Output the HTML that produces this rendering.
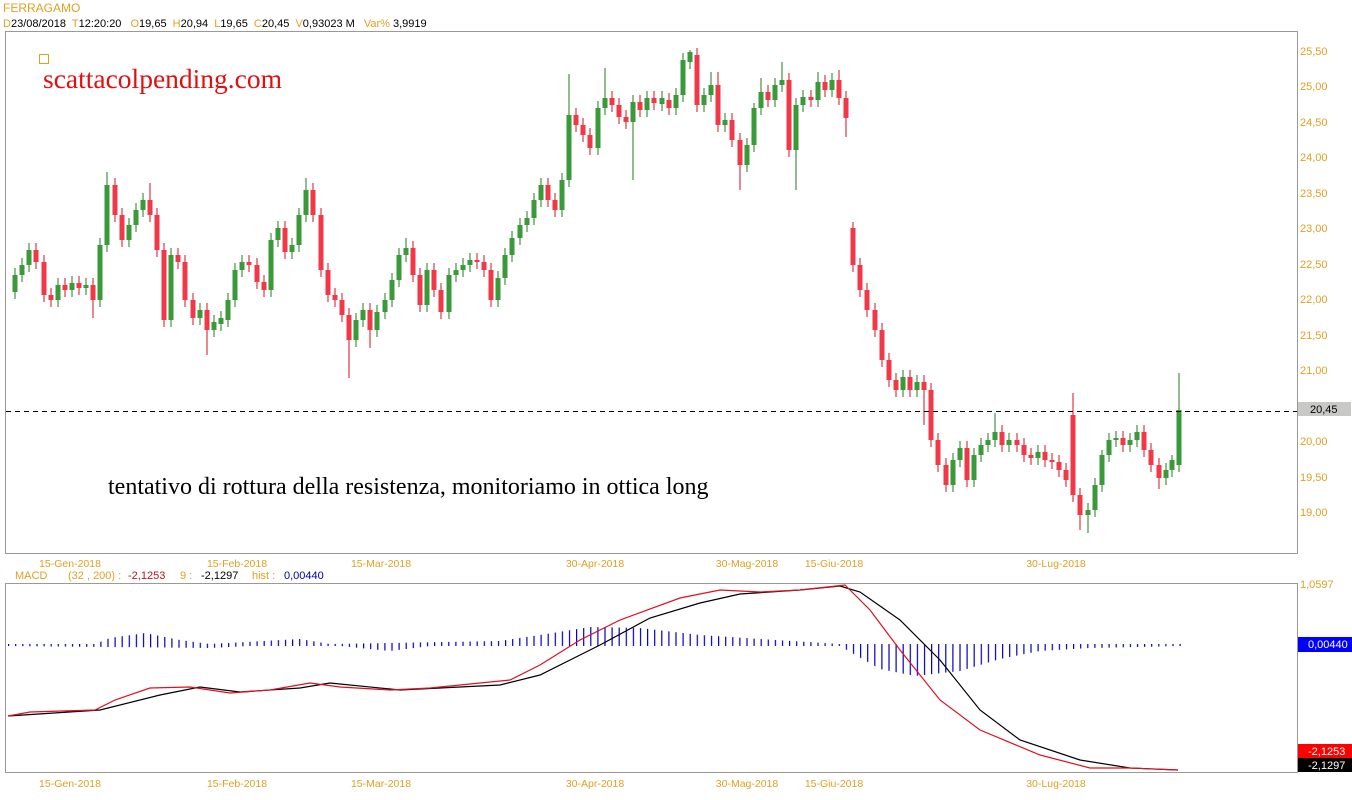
<!DOCTYPE html>
<html><head><meta charset="utf-8">
<style>
body{margin:0;background:#fff;width:1352px;height:800px;overflow:hidden;font-family:"Liberation Sans",sans-serif;}
svg{position:absolute;left:0;top:0}
.o{fill:#e0a020}
</style></head><body>
<svg width="1352" height="800" xmlns="http://www.w3.org/2000/svg" font-family="Liberation Sans, sans-serif" font-size="11">
<defs>
<pattern id="hp" x="8" y="0" width="7.1" height="800" patternUnits="userSpaceOnUse"><rect x="0" y="0" width="1.2" height="800" fill="#0000c0"/></pattern>
</defs>
<text x="3" y="12" class="o" font-size="12">FERRAGAMO</text>
<text x="3" y="27" font-size="11"><tspan class="o">D</tspan>23/08/2018 <tspan class="o" dx="3">T</tspan>12:20:20 <tspan class="o" dx="6">O</tspan>19,65 <tspan class="o" dx="3">H</tspan>20,94 <tspan class="o" dx="3">L</tspan>19,65 <tspan class="o" dx="3">C</tspan>20,45 <tspan class="o" dx="3">V</tspan>0,93023 M <tspan class="o" dx="6">Var%</tspan> 3,9919</text>
<rect x="5.5" y="31.5" width="1292" height="522" fill="none" stroke="#999"/>
<rect x="39.5" y="54.5" width="9" height="9" fill="none" stroke="#e0a020"/>
<text x="43" y="88" fill="#e01010" font-family="Liberation Serif, serif" font-size="27.5">scattacolpending.com</text>
<text x="108" y="494" fill="#000" font-family="Liberation Serif, serif" font-size="24">tentativo di rottura della resistenza, monitoriamo in ottica long</text>

<g font-size="11" class="o">
<text x="1300" y="55">25,50</text><text x="1300" y="90">25,00</text><text x="1300" y="126">24,50</text><text x="1300" y="161">24,00</text><text x="1300" y="197">23,50</text><text x="1300" y="232">23,00</text><text x="1300" y="268">22,50</text><text x="1300" y="303">22,00</text><text x="1300" y="339">21,50</text><text x="1300" y="374">21,00</text><text x="1300" y="445">20,00</text><text x="1300" y="481">19,50</text><text x="1300" y="516">19,00</text>
</g>

<path fill="none" stroke="#207a20" stroke-width="1" d="M15 268V299M22 258V282M29 243V272M58 278V307M72 276V297M86 278V295M100 238V307M107 172V252M129 218V247M136 203V232M143 193V217M171 248V327M200 303V325M214 315V337M221 311V331M228 293V327M235 263V307M242 255V277M271 233V297M278 221V247M292 238V259M299 208V252M306 178V222M356 313V347M363 303V327M377 305V337M385 293V319M392 273V307M399 248V287M406 238V262M427 263V312M449 268V319M456 263V282M463 258V277M470 253V272M498 271V307M505 248V285M512 231V262M520 218V245M527 211V232M534 193V225M541 178V207M562 173V217M569 74V187M598 101V155M605 68V115M633 95V180M647 91V117M662 91V111M676 88V115M683 53V102M690 50V69M704 88V112M711 72V102M725 113V132M747 138V172M754 103V152M761 78V115M775 78V107M782 62V92M796 98V190M803 90V112M818 72V107M832 73V97M903 370V397M917 375V397M953 453V492M960 441V467M974 448V487M981 438V462M988 433V452M995 413V447M1009 433V452M1038 445V465M1088 503V533M1095 478V517M1102 450V492M1109 433V462M1116 431V447M1130 433V452M1137 425V447M1166 463V485M1172 455V477M1179 373V472"/>
<path fill="none" stroke="#3a9a3a" stroke-width="5" d="M15 275V292M22 265V275M29 250V265M58 285V300M72 283V290M86 285V288M100 245V300M107 185V245M129 225V240M136 210V225M143 200V210M171 255V320M200 310V318M214 322V330M221 318V324M228 300V320M235 270V300M242 262V270M271 240V290M278 228V240M292 245V252M299 215V245M306 190V215M356 320V340M363 310V320M377 312V330M385 300V312M392 280V300M399 255V280M406 248V255M427 270V305M449 275V312M456 270V275M463 265V270M470 260V265M498 278V300M505 255V278M512 238V255M520 225V238M527 218V225M534 200V218M541 185V200M562 180V210M569 115V180M598 108V148M605 98V108M633 102V122M647 98V110M662 98V104M676 95V108M683 60V95M690 52V62M704 95V105M711 85V95M725 120V125M747 145V165M754 108V145M761 92V108M775 85V100M782 80V85M796 105V150M803 97V105M818 82V100M832 80V90M903 377V390M917 382V390M953 460V485M960 448V460M974 455V480M981 445V455M988 440V445M995 432V440M1009 440V445M1038 452V458M1088 510V515M1095 485V510M1102 455V485M1109 440V455M1116 438V440M1130 440V445M1137 432V440M1166 470V478M1172 460V470M1179 410V465"/>
<path fill="none" stroke="#d01020" stroke-width="1" d="M36 243V269M44 255V302M51 288V307M65 278V297M79 276V295M93 278V318M115 178V222M122 208V247M150 183V222M157 208V257M164 243V327M178 248V269M185 255V307M193 293V325M207 303V355M249 255V272M257 258V289M264 275V297M285 221V259M313 183V222M321 208V277M328 263V302M335 288V307M342 293V322M349 308V378M370 303V348M413 241V282M420 268V312M434 263V297M441 283V319M477 253V269M484 255V277M491 263V307M548 178V207M555 193V217M576 108V132M583 118V142M590 128V155M612 91V112M619 98V124M626 110V129M640 95V117M654 91V110M669 93V115M697 48V112M718 72V132M732 113V147M740 133V190M768 85V107M789 73V157M811 90V107M825 75V97M839 70V105M846 91V137M853 222V272M860 258V297M867 283V317M875 303V337M882 323V367M889 353V387M896 373V397M910 370V397M924 375V425M931 383V447M938 433V472M946 458V492M967 441V487M1002 425V452M1017 433V452M1024 438V462M1031 448V465M1045 445V467M1052 453V469M1059 455V477M1066 463V487M1073 393V502M1080 488V530M1123 431V452M1144 425V457M1151 443V472M1159 458V489"/>
<path fill="none" stroke="#f03848" stroke-width="5" d="M36 250V262M44 262V295M51 295V300M65 285V290M79 283V288M93 285V300M115 185V215M122 215V240M150 200V215M157 215V250M164 250V320M178 255V262M185 262V300M193 300V318M207 310V330M249 262V265M257 265V282M264 282V290M285 228V252M313 190V215M321 215V270M328 270V295M335 295V300M342 300V315M349 315V340M370 310V330M413 248V275M420 275V305M434 270V290M441 290V312M477 260V262M484 262V270M491 270V300M548 185V200M555 200V210M576 115V125M583 125V135M590 135V148M612 98V105M619 105V117M626 117V122M640 102V110M654 98V103M669 100V108M697 55V105M718 85V125M732 120V140M740 140V165M768 92V100M789 80V150M811 97V100M825 82V90M839 80V98M846 98V118M853 228V265M860 265V290M867 290V310M875 310V330M882 330V360M889 360V380M896 380V390M910 377V390M924 382V390M931 390V440M938 440V465M946 465V485M967 448V480M1002 432V445M1017 440V445M1024 445V455M1031 455V458M1045 452V460M1052 460V462M1059 462V470M1066 470V480M1073 415V495M1080 495V515M1123 438V445M1144 432V450M1151 450V465M1159 465V478"/>

<line x1="6" y1="411.5" x2="1297" y2="411.5" stroke="#000" stroke-dasharray="5,4"/>
<rect x="1298" y="402" width="53" height="14" fill="#c8c8c4"/>
<text x="1310" y="413" fill="#000">20,45</text>

<g font-size="10.5" class="o" text-anchor="middle">
<text x="70" y="567">15-Gen-2018</text><text x="237" y="567">15-Feb-2018</text><text x="381" y="567">15-Mar-2018</text><text x="595" y="567">30-Apr-2018</text><text x="747" y="567">30-Mag-2018</text><text x="834" y="567">15-Giu-2018</text><text x="1056" y="567">30-Lug-2018</text>
<text x="70" y="787">15-Gen-2018</text><text x="237" y="787">15-Feb-2018</text><text x="381" y="787">15-Mar-2018</text><text x="595" y="787">30-Apr-2018</text><text x="747" y="787">30-Mag-2018</text><text x="834" y="787">15-Giu-2018</text><text x="1056" y="787">30-Lug-2018</text>
</g>

<rect x="5.5" y="583.5" width="1292" height="189" fill="none" stroke="#999"/>
<text x="15" y="579" class="o">MACD</text>
<text x="68" y="579" class="o">(32 , 200) :</text>
<text x="128" y="579" fill="#c01020">-2,1253</text>
<text x="180" y="579" class="o">9 :</text>
<text x="201" y="579" fill="#000">-2,1297</text>
<text x="252" y="579" class="o">hist :</text>
<text x="284" y="579" fill="#0000a0">0,00440</text>

<polygon fill="url(#hp)" points="8,644 95,644 110,638 145,633 180,640 210,644 300,639 330,644 500,641 540,635 590,627 640,628 700,635 760,639 840,644 1182,644 1182,646 1090,648 1040,651 1000,659 960,671 915,676 880,669 852,653 840,646 430,646 390,651 340,646 250,646 210,648 8,646"/>
<polyline fill="none" stroke="#000" stroke-width="1.2" points="8,716 100,710 160,695 200,687 240,692 300,688 330,683 400,690 500,685 540,675 600,645 650,618 700,603 740,594 800,590 840,586 860,592 900,620 940,660 980,710 1020,740 1080,760 1130,768 1178,770"/>
<polyline fill="none" stroke="#e01020" stroke-width="1.2" points="8,716 30,712 95,710 115,700 150,688 190,687 230,693 270,690 310,683 340,687 390,690 430,688 510,680 540,665 580,640 620,620 680,598 720,590 760,592 800,590 845,585 870,610 900,650 940,700 980,730 1040,755 1090,768 1130,768 1178,770"/>

<text x="1300" y="588" class="o">1,0597</text>
<rect x="1298" y="637" width="54" height="15" fill="#0000ff"/>
<text x="1308" y="648" fill="#fff">0,00440</text>
<rect x="1298" y="744" width="54" height="14" fill="#ff0000"/>
<text x="1308" y="755" fill="#fff">-2,1253</text>
<rect x="1298" y="758" width="54" height="14" fill="#000"/>
<text x="1308" y="769" fill="#fff">-2,1297</text>
</svg>
</body></html>
